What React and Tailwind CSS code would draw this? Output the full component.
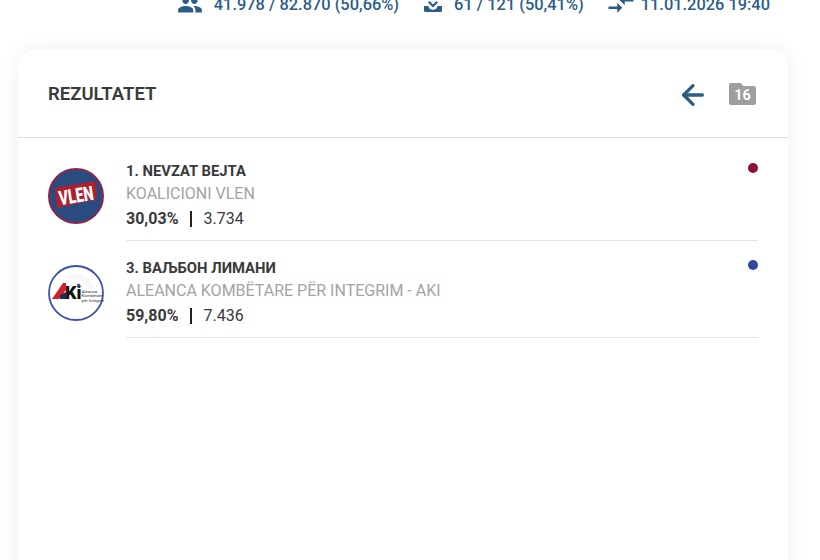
import { ArrowLeft } from 'lucide-react'

const FONT = { fontFamily: 'Roboto, sans-serif' }

const STATS = [
  {
    text: '41.978 / 82.870 (50,66%)',
    size: 26,
    wrap: 'gap-[11px]',
    path: 'M16 11c1.66 0 2.99-1.34 2.99-3S17.66 5 16 5c-1.66 0-3 1.34-3 3s1.34 3 3 3zm-8 0c1.66 0 2.99-1.34 2.99-3S9.66 5 8 5C6.34 5 5 6.34 5 8s1.34 3 3 3zm0 2c-2.33 0-7 1.17-7 3.5V19h14v-2.5c0-2.33-4.67-3.5-7-3.5zm8 0c-.29 0-.62.02-.97.05 1.16.84 1.97 1.97 1.97 3.45V19h6v-2.5c0-2.33-4.67-3.5-7-3.5z',
  },
  {
    text: '61 / 121 (50,41%)',
    size: 24,
    wrap: 'gap-[9px]',
    path: 'M3 13h4.5c0 2.4 2 3.8 4.5 3.8s4.5-1.4 4.5-3.8H21v4.5c0 .8-.7 1.5-1.5 1.5h-15C3.7 19 3 18.3 3 17.5zM7 9.5 8.6 8l3.4 3.4L15.4 8 17 9.5l-5 5z',
  },
  {
    text: '11.01.2026 19:40',
    size: 30,
    wrap: 'gap-[5px]',
    icon: '-mt-[3px]',
    path: 'M9.01 14H2v2h7.01v3L13 15l-3.99-4v3zm5.98-1v-3H22V8h-7.01V5L11 9l3.99 4z',
  },
]

function VlenLogo() {
  return (
    <svg width="56" height="56" viewBox="0 0 56 56" className="shrink-0">
      <circle cx="28" cy="28" r="27.2" fill="#2b4a7f" stroke="#a31f3c" strokeWidth="1.6" />
      <polygon points="7,20 47,13 49,31 9,40" fill="#b01f2c" />
      <text x="28" y="34.5" textAnchor="middle" fontSize="20" fontWeight="900" fill="#fff" transform="rotate(-9 28 27)" textLength="35" lengthAdjust="spacingAndGlyphs" style={FONT}>VLEN</text>
    </svg>
  )
}

function AkiLogo() {
  return (
    <svg width="56" height="56" viewBox="0 0 56 56" className="shrink-0">
      <circle cx="28" cy="28" r="27" fill="#fff" stroke="#3f53a6" strokeWidth="1.8" />
      <path d="M14 12c8-4 22-3 28 3l4 9-6-2-7-7z" fill="#f6f6f6" />
      <polygon points="4,34 15,18 18,18 18,25 11,34" fill="#d3202c" />
      <polygon points="12,30 18,27 18,34 12,34" fill="#1f2d5a" />
      <text x="17" y="33.5" fontSize="18" fontWeight="900" fill="#111" style={FONT}>Ki</text>
      <circle cx="30.5" cy="20" r="1.6" fill="#2f55a4" />
      <text x="33.5" y="27.5" fontSize="4.4" fill="#333" style={FONT}>Aleanca</text>
      <text x="33.5" y="32" fontSize="4.4" fill="#333" style={FONT}>Kombëtare</text>
      <text x="33.5" y="36.5" fontSize="4.4" fill="#333" style={FONT}>për Integrim</text>
    </svg>
  )
}

const RESULTS = [
  { name: '1. NEVZAT BEJTA', party: 'KOALICIONI VLEN', pct: '30,03%', votes: '3.734', dot: 'bg-[#8e0f2d]', Logo: VlenLogo },
  { name: '3. ВАЉБОН ЛИМАНИ', party: 'ALEANCA KOMBËTARE PËR INTEGRIM - AKI', pct: '59,80%', votes: '7.436', dot: 'bg-[#35479c]', Logo: AkiLogo },
]

export default function App() {
  return (
    <div className="h-[560px] overflow-hidden bg-white" style={FONT}>
      {/* Stats strip, scrolled partly out of view */}
      <div className="flex justify-end h-[24px] -mt-[7px] pr-[50px] gap-[22px] text-[#2b5d88] text-[16.4px] font-medium">
        {STATS.map(({ text, path, size, wrap, icon }) => (
          <div key={text} className={`flex items-center ${wrap}`}>
            <svg width={size} height={size} viewBox="0 0 24 24" fill="currentColor" className={icon}><path d={path} /></svg>
            <span>{text}</span>
          </div>
        ))}
      </div>

      <div className="mx-[18px] w-[770px] mt-[33px] h-[560px] bg-white rounded-2xl shadow-[0_0_20px_rgba(0,0,0,0.07)]">
        <div className="flex items-center justify-between h-[88px] pl-[30px] pr-[32px] border-b border-[#dcdcdc]">
          <h2 className="text-[18.5px] font-semibold text-[#3a3a3a] pt-[2px]">REZULTATET</h2>
          <div className="flex items-center gap-[20px] pt-[2px]">
            <ArrowLeft size={32} strokeWidth={2.5} className="text-[#2b5d88]" />
            <div className="relative w-[27px] h-[24px] -mt-[2px]">
              <svg width="27" height="24" viewBox="0 0 28 24" preserveAspectRatio="none" fill="#9e9e9e">
                <path d="M2 1h10l3 3h11c1 0 2 1 2 2v15c0 1-1 2-2 2H2c-1 0-2-1-2-2V3c0-1 1-2 2-2z" />
              </svg>
              <span className="absolute left-0 right-0 top-[6px] text-center text-[14.5px] leading-[16px] font-bold text-white">16</span>
            </div>
          </div>
        </div>

        <div className="pl-[30px] pr-[30px] pt-[6px]">
          {RESULTS.map(({ name, party, pct, votes, dot, Logo }) => (
            <div key={name} className="flex gap-[22px]">
              <div className="pt-[24px]"><Logo /></div>
              <div className="relative flex-1 h-[97px] pt-[17px] border-b border-[#e4e4e4]">
                <p className="text-[14.8px] leading-[20px] font-bold text-[#3a3a3a]">{name}</p>
                <p className="text-base leading-[24px] mt-[1px] text-[#a3a3a3]">{party}</p>
                <p className="text-base leading-[26px] text-[#3a3a3a]">
                  <span className="font-bold">{pct}</span>
                  <span className="inline-block w-[2px] h-[16px] align-[-3px] bg-[#222] ml-[12px] mr-[11px]" />
                  {votes}
                </p>
                <span className={`absolute right-0 top-[19px] w-[10px] h-[10px] rounded-full ${dot}`} />
              </div>
            </div>
          ))}
        </div>
      </div>
    </div>
  )
}
